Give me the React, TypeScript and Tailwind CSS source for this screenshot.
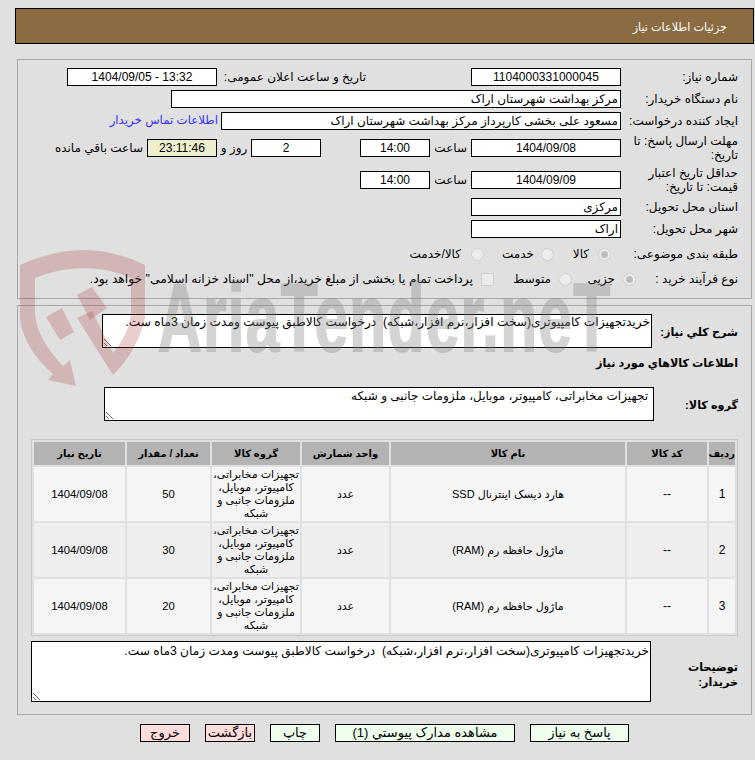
import React from "react";

const FONT = "font-['Liberation_Sans','DejaVu_Sans',sans-serif]";

function Box({ w, children, center, bg }: { w: string; children?: React.ReactNode; center?: boolean; bg?: string }) {
  return (
    <div className={`${w} h-[18px] shrink-0 border border-black ${bg ?? "bg-white"} px-[2px] leading-[16px] whitespace-nowrap overflow-hidden ${center ? "text-center" : "text-right"}`}>
      {children}
    </div>
  );
}

function Label({ children, w = "w-[117px]" }: { children: React.ReactNode; w?: string }) {
  return <div className={`${w} shrink-0 leading-[14.5px]`}>{children}</div>;
}

function Radio({ on }: { on?: boolean }) {
  return (
    <span className="w-[13px] h-[13px] shrink-0 rounded-full border border-[#cfcfcf] bg-[#ececec] flex items-center justify-center">
      {on ? <span className="w-[7px] h-[7px] rounded-full bg-[#bdbdbd]" /> : null}
    </span>
  );
}

const groupCell = (
  <>
    تجهیزات مخابراتی،
    <br />
    کامپیوتر، موبایل،
    <br />
    ملزومات جانبی و
    <br />
    شبکه
  </>
);

const rows = [
  { n: "1", name: "هارد دیسک اینترنال SSD", q: "50", bg: "bg-[#f5f5f5]" },
  { n: "2", name: "ماژول حافظه رم (RAM)", q: "30", bg: "bg-[#eeeeee]" },
  { n: "3", name: "ماژول حافظه رم (RAM)", q: "20", bg: "bg-[#f5f5f5]" },
];

const desc = "خریدتجهیزات کامپیوتری(سخت افزار،نرم افزار،شبکه)  درخواست کالاطبق پیوست ومدت زمان 3ماه ست.";

export default function App() {
  return (
    <div dir="rtl" className={`${FONT} relative w-[755px] h-[760px] overflow-hidden bg-[#e0e0e0] text-black text-[12px]`}>
      <div className="ml-[15px] mr-[1px] pt-[8px]">
        <div className="h-[36px] border border-black bg-[#8b6b41] text-white text-[11.2px] flex items-center pr-[26px] pt-[3px]">جزئیات اطلاعات نیاز</div>
      </div>

      <div className="ml-[17px] mr-[3px] mt-[15px] h-[240px] border border-[#a8a8a8] pr-[13px] pt-[8px]">
        <div className="flex items-center h-[18px]">
          <Label>شماره نیاز:</Label>
          <Box w="w-[150px]" center>1104000331000045</Box>
          <div className="w-[105px] shrink-0" />
          <div className="w-[149px] shrink-0 whitespace-nowrap">تاریخ و ساعت اعلان عمومی:</div>
          <Box w="w-[150px]" center><span dir="ltr">1404/09/05 - 13:32</span></Box>
        </div>
        <div className="flex items-center h-[18px] mt-[4px]">
          <Label>نام دستگاه خریدار:</Label>
          <Box w="w-[450px]">مرکز بهداشت شهرستان اراک</Box>
        </div>
        <div className="flex items-center h-[18px] mt-[4px]">
          <Label>ایجاد کننده درخواست:</Label>
          <Box w="w-[400px]">مسعود علی بخشی کارپرداز مرکز بهداشت شهرستان اراک</Box>
          <div className="mr-[3px] text-[#3333ff] text-[11.8px] whitespace-nowrap">اطلاعات تماس خریدار</div>
        </div>
        <div className="flex items-center h-[28px] mt-[4px]">
          <Label>مهلت ارسال پاسخ: تا تاریخ:</Label>
          <Box w="w-[150px]" center>1404/09/08</Box>
          <div className="w-[41px] pr-[4px] shrink-0">ساعت</div>
          <Box w="w-[70px]" center>14:00</Box>
          <div className="w-[39px] shrink-0" />
          <Box w="w-[70px]" center>2</Box>
          <div className="w-[34px] text-center shrink-0">روز و</div>
          <Box w="w-[70px]" center bg="bg-[#eeeecc]">23:11:46</Box>
          <div className="mr-[4px] whitespace-nowrap">ساعت باقي مانده</div>
        </div>
        <div className="flex items-center h-[28px] mt-[4px]">
          <Label>حداقل تاریخ اعتبار قیمت: تا تاریخ:</Label>
          <Box w="w-[150px]" center>1404/09/09</Box>
          <div className="w-[41px] pr-[4px] shrink-0">ساعت</div>
          <Box w="w-[70px]" center>14:00</Box>
        </div>
        <div className="flex items-center h-[18px] mt-[4px]">
          <Label>استان محل تحویل:</Label>
          <Box w="w-[150px]">مرکزی</Box>
        </div>
        <div className="flex items-center h-[18px] mt-[4px]">
          <Label>شهر محل تحویل:</Label>
          <Box w="w-[150px]">اراک</Box>
        </div>
        <div className="flex items-center h-[20px] mt-[6px]">
          <Label>طبقه بندی موضوعی:</Label>
          <div className="mr-[10px]"><Radio on /></div>
          <span className="mr-[9px] w-[35px]">کالا</span>
          <Radio />
          <span className="mr-[7px] w-[50px]">خدمت</span>
          <Radio />
          <span className="mr-[10px] whitespace-nowrap">کالا/خدمت</span>
        </div>
        <div className="flex items-center h-[22px] mt-[4px]">
          <Label w="w-[102px]">نوع فرآیند خرید :</Label>
          <Radio on />
          <span className="mr-[8px] w-[43px]">جزیی</span>
          <Radio />
          <span className="mr-[8px] w-[57px]">متوسط</span>
          <span className="w-[13px] h-[13px] shrink-0 rounded-[2px] border border-[#cfcfcf] bg-[#ececec]" />
          <span className="mr-[8px] whitespace-nowrap text-[12.3px]">پرداخت تمام یا بخشی از مبلغ خرید،از محل "اسناد خزانه اسلامی" خواهد بود.</span>
        </div>
      </div>

      <div className="ml-[17px] mr-[3px] mt-[6px] h-[410px] border border-[#a8a8a8] pr-[13px] pt-[8px]">
        <div className="flex items-center">
          <div className="w-[86px] shrink-0 font-bold text-[11.2px] whitespace-nowrap pt-[2px]">شرح کلي نیاز:</div>
          <textarea readOnly dir="rtl" value={desc} className="w-[550px] h-[34px] shrink-0 border border-black bg-white px-[1px] leading-[15px] text-[12.2px] block outline-none" />
        </div>
        <div className="font-bold text-[11.2px] mt-[5px] h-[20px] leading-[20px]">اطلاعات کالاهاي مورد نیاز</div>
        <div className="flex items-center mt-[14px]">
          <div className="w-[84px] shrink-0 font-bold text-[11.2px] whitespace-nowrap pt-[2px]">گروه کالا:</div>
          <textarea readOnly dir="rtl" value="تجهیزات مخابراتی، کامپیوتر، موبایل، ملزومات جانبی و شبکه" className="w-[550px] h-[34px] shrink-0 border border-black bg-white px-[5px] pt-[1px] leading-[15px] block outline-none" />
        </div>
        <table className="mt-[18px] w-[707px] table-fixed border border-[#c8c8c8] border-separate border-spacing-[2px] text-center">
          <colgroup>
            <col className="w-[26px]" />
            <col className="w-[80px]" />
            <col className="w-[234px]" />
            <col className="w-[87px]" />
            <col className="w-[88px]" />
            <col className="w-[83px]" />
            <col className="w-[91px]" />
          </colgroup>
          <thead>
            <tr className="h-[23px] bg-[#b3b3b3]">
              {["ردیف", "کد کالا", "نام کالا", "واحد شمارش", "گروه کالا", "تعداد / مقدار", "تاریخ نیاز"].map((h) => (
                <th key={h} className="p-0 font-bold text-[10px] whitespace-nowrap">{h}</th>
              ))}
            </tr>
          </thead>
          <tbody>
            {rows.map((r) => (
              <tr key={r.n} className={`h-[54px] ${r.bg}`}>
                <td className="p-0">{r.n}</td>
                <td className="p-0">--</td>
                <td className="p-0 text-[11px]">{r.name}</td>
                <td className="p-0 text-[11px]">عدد</td>
                <td className="p-0 text-[11px] leading-[13px] whitespace-nowrap">{groupCell}</td>
                <td className="p-0 text-[11.3px]">{r.q}</td>
                <td className="p-0 text-[11.3px]">1404/09/08</td>
              </tr>
            ))}
          </tbody>
        </table>
        <div className="flex items-center mt-[5px]">
          <div className="w-[87px] shrink-0 font-bold text-[11.2px] leading-[15px] pt-[7px]">توضیحات<br />خریدار:</div>
          <textarea readOnly dir="rtl" value={desc} className="w-[620px] h-[61px] shrink-0 border border-black bg-white px-[1px] pt-[2px] leading-[15px] text-[12.2px] block outline-none" />
        </div>
      </div>

      <div className="ml-[17px] mr-[3px] mt-[9px] flex justify-center gap-[15px] text-[13px]">
        {[
          ["پاسخ به نیاز", "w-[99px]", "bg-[#eeffee]"],
          ["مشاهده مدارک پیوستي (1)", "w-[180px]", "bg-[#eeffee]"],
          ["چاپ", "w-[50px]", "bg-[#eeffee]"],
          ["بازگشت", "w-[50px]", "bg-[#ffdddd]"],
          ["خروج", "w-[50px]", "bg-[#ffdddd]"],
        ].map(([t, w, bg]) => (
          <button key={t} className={`${w} ${bg} h-[18px] border border-black leading-[16px] whitespace-nowrap overflow-hidden p-0`}>{t}</button>
        ))}
      </div>

      {/* watermark overlay */}
      <div className="absolute inset-0 pointer-events-none">
        <svg className="absolute left-0 top-0" width="160" height="400" viewBox="0 0 160 400">
          <g fill="#a83232" fillOpacity="0.24">
            <path d="M20 265 Q85 235 145 265 L145 318 Q138 350 113 375 L77 318 L92 311 L113 353 Q128 335 131 315 L131 278 Q85 258 35 278 L35 315 Q38 340 63 366 L70 360 L76 386 L48 380 L53 374 Q25 350 20 320 Z" />
            <path d="M46 317 L62 308 L74 332 L60 340 Z" />
            <path d="M77 295 L92 287 L107 308 L90 320 Z" />
          </g>
        </svg>
        <div dir="ltr" className="absolute left-[158px] top-[270px] origin-top-left scale-x-[0.63] text-[96px] leading-[96px] font-bold tracking-[2px] text-[#808080] [-webkit-text-stroke:2px_#808080] opacity-[0.33] whitespace-nowrap font-['Liberation_Sans',sans-serif]">
          AriaTender.neT
        </div>
      </div>
    </div>
  );
}
